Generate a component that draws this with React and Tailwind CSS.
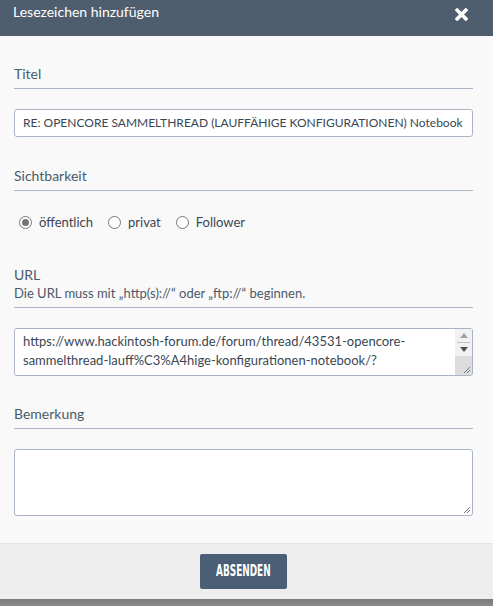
import React from "react";

function Section({ children, sub }) {
  return (
    <div className="border-b border-[#a9b5c4] pb-[5px]">
      <div className="text-[14px] leading-[19px] text-[#4b5a6b]">{children}</div>
      {sub && <div className="text-[13px] leading-[18px] text-[#4b5a6b]">{sub}</div>}
    </div>
  );
}

function Radio({ checked, label }) {
  return (
    <label className="flex items-center gap-[7px]">
      <span className="w-[13px] h-[13px] rounded-full border border-[#767676] bg-white flex items-center justify-center">
        {checked && <span className="w-[7px] h-[7px] rounded-full bg-[#767676]" />}
      </span>
      <span>{label}</span>
    </label>
  );
}

function Grip() {
  return (
    <svg width="9" height="9" viewBox="0 0 9 9" className="absolute right-[1px] bottom-[1px]">
      <path d="M8 2 L2 8 M8 5 L5 8" stroke="#777" strokeWidth="1" />
    </svg>
  );
}

export default function App() {
  return (
    <div className="w-[493px] h-[606px] flex flex-col bg-[#f9f9f9] text-[#3a4654]" style={{ fontFamily: "Lato, 'Noto Sans', sans-serif" }}>
      <div className="h-[36px] shrink-0 bg-[#4f5e6f] flex items-start justify-between pl-[13px] pr-[25px] pt-[2px]">
        <span className="text-white text-[14px] leading-[19px]">Lesezeichen hinzufügen</span>
        <svg width="13" height="13" viewBox="0 0 13 13" className="mt-[6px]">
          <path d="M2.2 2.2 L10.8 10.8 M10.8 2.2 L2.2 10.8" stroke="white" strokeWidth="3.6" strokeLinecap="square" />
        </svg>
      </div>
      <div className="flex-1 pl-[14px] pr-[20px] pt-[28px]">
        <Section>Titel</Section>
        <div className="mt-[20px] h-[28px] border border-[#a9b5c4] rounded-[3px] bg-white flex items-center px-[8px] text-[12px] whitespace-nowrap overflow-hidden">
          RE: OPENCORE SAMMELTHREAD (LAUFFÄHIGE KONFIGURATIONEN) Notebook
        </div>
        <div className="mt-[29px]">
          <Section>Sichtbarkeit</Section>
        </div>
        <div className="mt-[22px] flex items-center gap-[15px] pl-[5px] text-[13px] leading-[19px]">
          <Radio checked label="öffentlich" />
          <Radio label="privat" />
          <Radio label="Follower" />
        </div>
        <div className="mt-[33px]">
          <Section sub={"Die URL muss mit „http(s)://“ oder „ftp://“ beginnen."}>URL</Section>
        </div>
        <div className="mt-[20px] h-[48px] border border-[#a9b5c4] rounded-[3px] bg-white flex overflow-hidden">
          <div className="flex-1 px-[8px] pt-[3px] text-[13px] leading-[19px] text-[#3a4654]">
            https://www.hackintosh-forum.de/forum/thread/43531-opencore-<br />sammelthread-lauff%C3%A4hige-konfigurationen-notebook/?
          </div>
          <div className="w-[17px] flex flex-col bg-[#f1f1f1]">
            <div className="h-[13px] flex items-center justify-center">
              <svg width="8" height="5" viewBox="0 0 8 5"><path d="M0 5 L4 0 L8 5Z" fill="#a3a3a3" /></svg>
            </div>
            <div className="mx-[2px] h-px bg-[#c1c1c1]" />
            <div className="h-[13px] flex items-center justify-center">
              <svg width="8" height="5" viewBox="0 0 8 5"><path d="M0 0 L4 5 L8 0Z" fill="#505050" /></svg>
            </div>
            <div className="flex-1 bg-[#dcdcdc] relative">
              <Grip />
            </div>
          </div>
        </div>
        <div className="mt-[28px]">
          <Section>Bemerkung</Section>
        </div>
        <div className="mt-[20px] h-[67px] border border-[#a9b5c4] rounded-[3px] bg-white relative">
          <Grip />
        </div>
      </div>
      <div className="h-[56px] shrink-0 bg-[#eeeeee] border-t border-[#e2e2e2] flex items-start justify-center pt-[10px] pr-[6px]">
        <button className="w-[87px] h-[35px] rounded-[2px] bg-[#4a5e76] text-white text-[15px] font-bold flex items-center justify-center overflow-hidden" style={{ fontFamily: "'DejaVu Sans Condensed', 'Liberation Sans Narrow', sans-serif", fontStretch: "condensed" }}>
          <span className="inline-block scale-x-[0.66]">ABSENDEN</span>
        </button>
      </div>
      <div className="h-[7px] shrink-0 bg-gradient-to-b from-[#7a7a7a] to-[#8a8a8a]" />
    </div>
  );
}
